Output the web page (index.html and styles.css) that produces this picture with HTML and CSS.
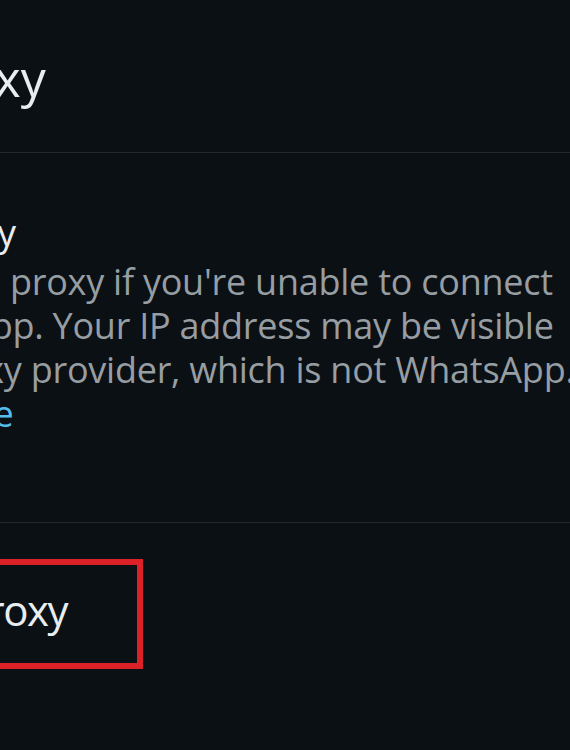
FILE: index.html
```html
<!DOCTYPE html>
<html>
<head>
    <title>Proxy</title>
    <link rel="stylesheet" href="styles.css">
</head>
<body>
    <div class="screen">
        <header class="toolbar">
            <h1 class="title">Proxy</h1>
        </header>

        <section class="proxy-info">
            <h2 class="info-heading">Use proxy</h2>
            <p class="info-text">
                <span class="line first-line">Only use a proxy if you're unable to connect</span>
                <span class="line">to WhatsApp. Your IP address may be visible</span>
                <span class="line">to the proxy provider, which is not WhatsApp.</span>
                <a class="line learn-more" href="#">Learn more</a>
            </p>
        </section>

        <section class="setup">
            <div class="setup-box">Set up proxy</div>
        </section>
    </div>
</body>
</html>
```

FILE: styles.css
```css
body {
    margin: 0;
    background-color: #0b1014;
    font-family: "Open Sans", "Noto Sans", sans-serif;
    overflow: hidden;
}

.screen {
    width: 570px;
    height: 750px;
    overflow: hidden;
}

.toolbar {
    height: 153px;
    border-bottom: 1px solid #22282c;
    box-sizing: border-box;
    padding-top: 53px;
}

.title {
    margin: 0 0 0 -86px;
    font-size: 50px;
    line-height: 50px;
    font-weight: normal;
    color: #e9edef;
    white-space: nowrap;
}

.proxy-info {
    padding: 57px 0 86px 0;
    border-bottom: 1px solid #22282c;
    margin-left: -179px;
}

.info-heading {
    margin: 0 0 6px 22px;
    font-size: 37px;
    line-height: 44px;
    font-weight: normal;
    color: #e9edef;
    white-space: nowrap;
}

.info-text {
    margin: 0;
    font-size: 36px;
    line-height: 44px;
    letter-spacing: -0.25px;
    color: #979ea3;
}

.line {
    display: block;
    white-space: nowrap;
}

.first-line {
    padding-left: 7px;
}

.learn-more {
    color: #53bdeb;
    text-decoration: none;
}

.setup {
    padding-top: 36px;
}

.setup-box {
    display: inline-block;
    margin-left: -194px;
    padding: 15px 70px 23px 27px;
    border: 6px solid #dc2129;
    font-size: 42px;
    line-height: 60px;
    letter-spacing: -1.5px;
    color: #e9edef;
    white-space: nowrap;
}
```
